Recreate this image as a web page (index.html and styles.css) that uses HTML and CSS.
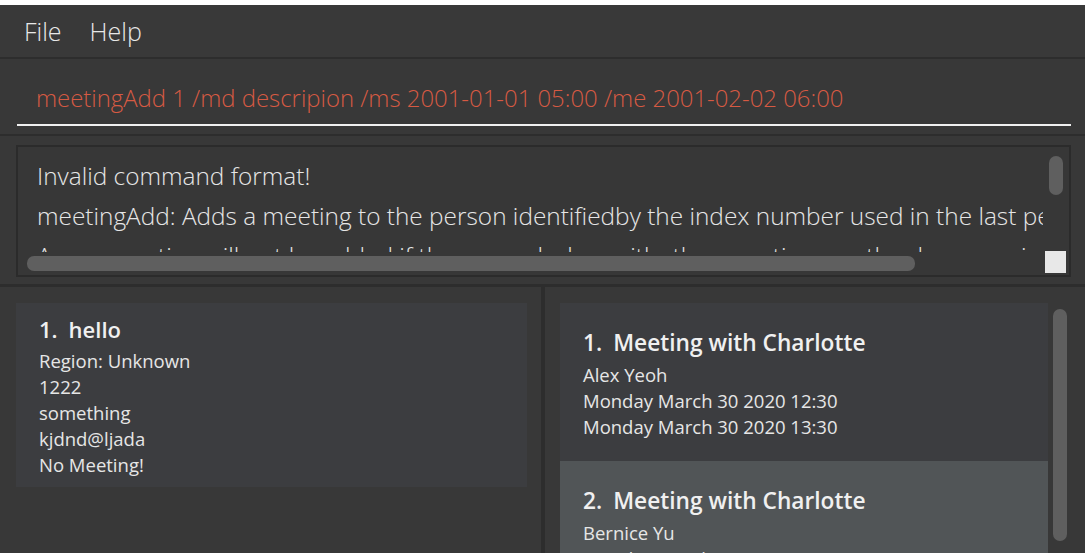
FILE: index.html
```html
<!DOCTYPE html>
<html>
<head>
<meta charset="utf-8">
<link rel="stylesheet" href="styles.css">
</head>
<body>
<div class="top-strip"></div>
<div class="app">
  <div class="menubar">
    <span class="menu-item">File</span>
    <span class="menu-item">Help</span>
  </div>
  <div class="command-section">
    <div class="command-field">meetingAdd 1 /md descripion /ms 2001-01-01 05:00 /me 2001-02-02 06:00</div>
  </div>
  <div class="result-section">
    <div class="result-box">
      <div class="result-text">
        <div class="line">Invalid command format!</div>
        <div class="line">meetingAdd: Adds a meeting to the person identifiedby the index number used in the last person listing.</div>
        <div class="line">A new meeting will not be added if there are clashes withother meetings on the day or period.</div>
      </div>
      <div class="vscroll"><div class="vthumb"></div></div>
      <div class="hscroll"><div class="hthumb"></div></div>
      <div class="corner"></div>
    </div>
  </div>
  <div class="split">
    <div class="left-pane">
      <div class="person-card">
        <div class="card-title"><span class="idx">1.</span>hello</div>
        <div class="card-line">Region: Unknown</div>
        <div class="card-line">1222</div>
        <div class="card-line">something</div>
        <div class="card-line">kjdnd@ljada</div>
        <div class="card-line">No Meeting!</div>
      </div>
    </div>
    <div class="divider"></div>
    <div class="right-pane">
      <div class="meeting-list">
        <div class="meeting-card">
          <div class="meeting-title"><span class="idx">1.</span>Meeting with Charlotte</div>
          <div class="card-line">Alex Yeoh</div>
          <div class="card-line">Monday March 30 2020 12:30</div>
          <div class="card-line">Monday March 30 2020 13:30</div>
        </div>
        <div class="meeting-card alt">
          <div class="meeting-title"><span class="idx">2.</span>Meeting with Charlotte</div>
          <div class="card-line">Bernice Yu</div>
          <div class="card-line">Monday March 30 2020 12:30</div>
          <div class="card-line">Monday March 30 2020 13:30</div>
        </div>
      </div>
      <div class="list-scroll"><div class="list-thumb"></div></div>
    </div>
  </div>
</div>
</body>
</html>
```
FILE: styles.css
```css
html, body {
  margin: 0;
  padding: 0;
  background: #ffffff;
  width: 1085px;
  height: 553px;
  overflow: hidden;
  font-family: "Open Sans", "Noto Sans", sans-serif;
}
.top-strip {
  height: 5px;
  background: #ffffff;
}
.app {
  height: 548px;
  background: #383838;
  display: flex;
  flex-direction: column;
}
.menubar {
  height: 54px;
  box-sizing: border-box;
  border-bottom: 2px solid #2d2d2d;
  display: flex;
  align-items: center;
  padding-left: 24px;
  gap: 28px;
  background: #393939;
}
.menu-item {
  color: #e8e8e8;
  font-size: 25px;
  font-weight: 300;
}
.command-section {
  height: 77px;
  box-sizing: border-box;
  border-bottom: 2px solid #2d2d2d;
  padding: 0 14px 0 17px;
  display: flex;
  flex-direction: column;
  justify-content: flex-end;
}
.command-field {
  color: #d65a43;
  font-size: 23.9px;
  font-weight: 300;
  padding-left: 19px;
  line-height: 40px;
  border-bottom: 2px solid #f0f0f0;
  margin-bottom: 8px;
  padding-bottom: 6px;
  white-space: nowrap;
  overflow: hidden;
}
.result-section {
  height: 151px;
  border-bottom: 3px solid #2d2d2d;
  padding: 9px 14px 9px 16px;
  box-sizing: border-box;
}
.result-box {
  position: relative;
  height: 132px;
  border: 2px solid #2b2b2b;
  background: #373737;
  box-sizing: border-box;
  overflow: hidden;
}
.result-text {
  position: absolute;
  left: 19px;
  top: 9px;
  right: 26px;
  bottom: 23px;
  overflow: hidden;
  color: #e6e6e6;
  font-size: 24.4px;
  font-weight: 300;
  white-space: nowrap;
}
.line {
  line-height: 40px;
}
.vscroll {
  position: absolute;
  right: 6px;
  top: 9px;
  width: 14px;
  height: 39px;
}
.vthumb {
  width: 100%;
  height: 100%;
  background: #5f5f5f;
  border-radius: 7px;
}
.hscroll {
  position: absolute;
  left: 9px;
  bottom: 4px;
  width: 888px;
  height: 15px;
}
.hthumb {
  width: 100%;
  height: 100%;
  background: #5f5f5f;
  border-radius: 7px;
}
.corner {
  position: absolute;
  right: 3px;
  bottom: 2px;
  width: 21px;
  height: 22px;
  background: #e8e8e8;
}
.split {
  flex: 1;
  display: flex;
  min-height: 0;
}
.left-pane {
  width: 541px;
  padding: 16px 14px 0 16px;
  box-sizing: border-box;
}
.divider {
  width: 4px;
  background: #2d2d2d;
}
.right-pane {
  flex: 1;
  position: relative;
  padding: 16px 0 0 15px;
  overflow: hidden;
}
.person-card {
  background: #3c3d40;
  padding: 12px 23px 9px;
  height: 184px;
  box-sizing: border-box;
}
.card-title {
  color: #f0f0f0;
  font-size: 22px;
  font-weight: 600;
  line-height: 28px;
  margin-bottom: 5px;
}
.idx {
  margin-right: 11px;
}
.card-line {
  color: #e6e6e6;
  font-size: 18.5px;
  line-height: 26px;
}
.meeting-list {
  width: 488px;
}
.meeting-card {
  background: #3c3d40;
  height: 158px;
  padding: 25px 23px 0;
  box-sizing: border-box;
}
.meeting-card.alt {
  background: #515557;
}
.meeting-title {
  color: #f0f0f0;
  font-size: 22.7px;
  font-weight: 600;
  line-height: 30px;
  margin-bottom: 4px;
}
.list-scroll {
  position: absolute;
  left: 508px;
  top: 22px;
  width: 14px;
  height: 232px;
}
.list-thumb {
  width: 100%;
  height: 100%;
  background: #5f5f5f;
  border-radius: 7px;
}
```
